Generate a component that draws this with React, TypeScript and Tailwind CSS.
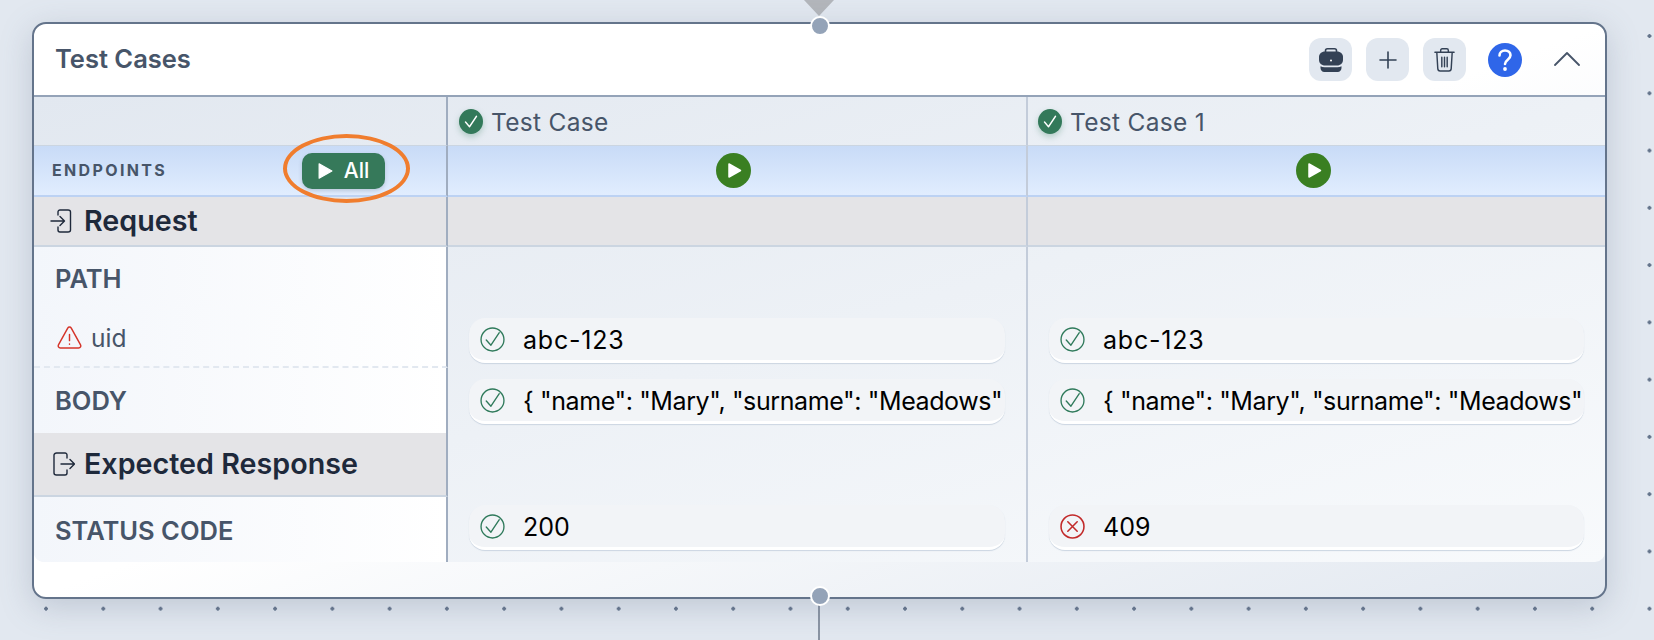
import React from "react";

const font = { fontFamily: "Inter, 'Liberation Sans', sans-serif" };

function CheckCircle({ className = "" }: { className?: string }) {
  return (
    <svg viewBox="0 0 24 24" className={className} fill="none" stroke="#2f7a5b" strokeWidth="1.3" strokeLinecap="round" strokeLinejoin="round">
      <circle cx="12" cy="12" r="11" />
      <path d="M6 12.500 10.500 17.500 18.500 5.500" />
    </svg>
  );
}

function CrossCircle({ className = "" }: { className?: string }) {
  return (
    <svg viewBox="0 0 24 24" className={className} fill="none" stroke="#c22a2a" strokeWidth="1.5" strokeLinecap="round">
      <circle cx="12" cy="12" r="11" />
      <path d="M7.500 7.500 16.500 16.500M16.500 7.500 7.500 16.500" />
    </svg>
  );
}

function StatusBadge() {
  return (
    <svg viewBox="0 0 24 24" className="w-6 h-[25px] shrink-0 drop-shadow-[0_3px_3px_rgba(47,122,91,0.3)]" preserveAspectRatio="none">
      <circle cx="12" cy="12" r="12" fill="#33795a" />
      <path d="M6.500 12.500 10.500 17 17.500 7" fill="none" stroke="#fff" strokeWidth="1.400" strokeLinecap="round" strokeLinejoin="round" />
    </svg>
  );
}

function PlayRound() {
  return (
    <svg viewBox="0 0 35 35" className="w-[35px] h-[35px]">
      <circle cx="17.500" cy="17.500" r="17.500" fill="#3a7f22" />
      <path d="M13 11 24.500 17.500 13 24Z" fill="#fff" stroke="#fff" strokeWidth="1.500" strokeLinejoin="round" />
    </svg>
  );
}

function Pill({ text, ok = true, spacing = "" }: { text: string; ok?: boolean; spacing?: string }) {
  return (
    <div className="flex items-center w-full h-[45px] pl-[11px] pr-[2px] rounded-[16px] bg-[#f2f4f7] border-b-[3px] border-white shadow-[0_1px_1px_#cbd5e1]">
      {ok ? <CheckCircle className="w-[25px] h-[25px] shrink-0" /> : <CrossCircle className="w-[25px] h-[25px] shrink-0" />}
      <span className={`ml-[18px] mt-[2px] text-[25px] leading-[30px] text-black whitespace-nowrap ${spacing}`}>{text}</span>
    </div>
  );
}

function IconButton({ children }: { children: React.ReactNode }) {
  return <div className="w-[43px] h-[43px] rounded-[12px] bg-[#e2e8f0] flex items-center justify-center">{children}</div>;
}

const cols = [
  { name: "Test Case 0", label: "Test Case", uid: "abc-123", status: "200", ok: true, pad: "px-[21px]", border: "border-r-2 border-[#c3ccda]", pl: "pl-[11px]", play: "pr-[8px]" },
  { name: "Test Case 1", label: "Test Case 1", uid: "abc-123", status: "409", ok: false, pad: "pl-[21px] pr-[22px]", border: "", pl: "pl-[10px]", play: "pr-[8px]" },
];

const leftCell = "border-r-2 border-[#a0adc0] flex items-center";
const softLeft = "bg-linear-to-r from-[#f3f6fb] to-white";

export default function App() {
  return (
    <div
      style={font}
      className="relative w-full h-[640px] overflow-hidden bg-[#e2e8f0] bg-[radial-gradient(circle,#64748b_1.6px,transparent_2px)] bg-[size:57.27px_57.27px] bg-[position:17.4px_7.4px] pt-[22px] pl-[32px]"
    >
      {/* incoming triangle and edge */}
      <svg viewBox="0 0 30 16" className="absolute left-[804px] top-0 w-[30px] h-[16px]">
        <path d="M0 0H30L15 16Z" fill="#b3b6bb" />
      </svg>
      <div className="absolute left-[818px] top-[600px] w-[2px] h-[40px] bg-[#8a94a3]" />

      <div className="relative w-[1575px] h-[577px] rounded-[14px] border-2 border-[#64748b] bg-linear-to-br from-white from-50% to-[#e2e8f0] shadow-[0_8px_32px_rgba(100,116,139,0.28)]">
        {/* handles */}
        <div className="absolute left-[776px] top-[-8px] w-[20px] h-[20px] rounded-full bg-[#94a3b8] border-2 border-white z-10" />
        <div className="absolute left-[776px] top-[562px] w-[20px] h-[20px] rounded-full bg-[#94a3b8] border-2 border-white z-10" />

        {/* header */}
        <div className="h-[73px] flex items-center pl-[21px] border-b-2 border-[#94a3b8]">
          <div className="text-[25.5px] font-semibold text-[#475569]">Test Cases</div>
          <div className="ml-auto flex items-center">
            <div className="flex gap-[14px]">
              <IconButton>
                <svg viewBox="0 0 24 24" className="w-[24px] h-[24px]" fill="#334155">
                  <path d="M6.500 5V2.800C6.500 1.500 7.500.8 8.500.8h7c1 0 2 .7 2 2V5" fill="none" stroke="#334155" strokeWidth="1.600" />
                  <path d="M6 3.500h12c3.500 0 6 2.400 6 5.500v3c0 3-2.500 5.500-6 5.500H6C2.500 17.500 0 15 0 12V9c0-3.100 2.500-5.500 6-5.500Z" />
                  <path d="M1.500 18.300c1.200.6 2.600 1 4.200 1h12.600c1.600 0 3-.4 4.200-1V20c0 2.200-1.600 4-3.800 4H5.300c-2.200 0-3.800-1.800-3.800-4Z" />
                  <circle cx="12" cy="12.500" r="1" fill="#fff" />
                </svg>
              </IconButton>
              <IconButton>
                <svg viewBox="0 0 18 18" className="w-[18px] h-[18px]" fill="none" stroke="#334155" strokeWidth="1.600" strokeLinecap="round">
                  <path d="M9 1v16M1 9h16" />
                </svg>
              </IconButton>
              <IconButton>
                <svg viewBox="0 0 24 26" className="w-[23px] h-[26px]" fill="none" stroke="#334155" strokeWidth="1.500" strokeLinecap="round" strokeLinejoin="round">
                  <path d="M2 5h20M8 5V3c0-1 .7-1.700 1.600-1.700h4.800c.9 0 1.600.7 1.600 1.700v2" />
                  <path d="M4 5.500 5 22c.1 1.500 1 2.400 2.400 2.400h9.200c1.400 0 2.300-.9 2.400-2.400l1-16.500" />
                  <path d="M9.200 10v10M12 10v10M14.800 10v10" />
                </svg>
              </IconButton>
            </div>
            <svg viewBox="0 0 34 34" className="w-[34px] h-[34px] ml-[22px]">
              <circle cx="17" cy="17" r="17" fill="#2f66e9" />
              <path d="M11.500 12.500c0-3 2.400-5 5.500-5s5.500 2 5.500 4.800c0 4.300-5.500 4.400-5.500 8.700" fill="none" stroke="#fff" strokeWidth="2.600" strokeLinecap="round" />
              <circle cx="17" cy="26" r="1.900" fill="#fff" />
            </svg>
            <svg viewBox="0 0 26 14" className="w-[26px] h-[14px] ml-[32px] mr-[25px] mb-[2px]" fill="none" stroke="#475569" strokeWidth="1.800" strokeLinecap="round" strokeLinejoin="round">
              <path d="M1 13 13 1l12 12" />
            </svg>
          </div>
        </div>

        {/* table */}
        <div className="grid grid-cols-[414px_580px_1fr] grid-rows-[49px_51px_50px_58px_63px_65px_64px_65px] rounded-b-[10px] overflow-hidden bg-linear-to-br from-[#e2e8f0] to-[#f8fafc]">
          {/* title row */}
          <div className="border-r-2 border-[#a0adc0] border-b border-b-[#cbd5e1]" />
          {cols.map((c) => (
            <div key={c.name} className={`flex items-center gap-2 border-b border-b-[#cbd5e1] ${c.pl} ${c.border}`}>
              <StatusBadge />
              <span className="mt-[2px] text-[24.5px] font-normal text-[#475569] tracking-[0.3px]">{c.label}</span>
            </div>
          ))}

          {/* endpoints row */}
          <div className={`${leftCell} relative pl-[18px] pb-[2px] border-b-2 border-b-[#bcd2f3] bg-linear-to-b from-[#c8dbf7] to-[#e1edfe]`}>
            <span className="text-[16px] font-bold tracking-[2.35px] text-[#475569]">ENDPOINTS</span>
            <div className="absolute left-[268px] top-[7px] w-[83px] h-[36px] rounded-[10px] bg-[#36795a] shadow-[0_2px_4px_rgba(51,65,85,0.2)] flex items-center justify-center gap-[11px]">
              <svg viewBox="0 0 14 16" className="w-[15px] h-[18px]">
                <path d="M1 1.200 13 8 1 14.800Z" fill="#fff" stroke="#fff" strokeWidth="1" strokeLinejoin="round" />
              </svg>
              <span className="text-[21px] font-medium text-white">All</span>
            </div>
            <div className="absolute left-[249px] top-[-12px] w-[127px] h-[69px] rounded-[50%] border-[4px] border-[#f07d2e] z-10" />
          </div>
          {cols.map((c) => (
            <div key={c.name} className={`flex items-center justify-center border-b-2 border-b-[#bcd2f3] bg-linear-to-b from-[#c8dbf7] to-[#e1edfe] ${c.play} ${c.border}`}>
              <PlayRound />
            </div>
          ))}

          {/* request row */}
          <div className={`${leftCell} bg-[#e4e4e7] border-b-2 border-b-[#cbd5e1] pl-[16px]`}>
            <svg viewBox="0 0 22 24" className="w-[22px] h-[24px] shrink-0" fill="none" stroke="#1e293b" strokeWidth="1.400" strokeLinecap="round" strokeLinejoin="round">
              <path d="M8 6V3c0-1 .7-2 2-2h8c1.300 0 2.500 1 2.500 2v18c0 1-1.200 2-2.500 2h-8c-1.300 0-2-1-2-2v-3" />
              <path d="M1 12h13M10 7.500 14.500 12 10 16.500" />
            </svg>
            <span className="ml-[12px] text-[28.7px] font-semibold text-[#1e293b]">Request</span>
          </div>
          {cols.map((c) => (
            <div key={c.name} className={`bg-[#e4e4e7] border-b-2 border-b-[#cbd5e1] ${c.border}`} />
          ))}

          {/* path row */}
          <div className={`${leftCell} ${softLeft} pl-[21px] pt-[6px]`}>
            <span className="text-[25.5px] font-semibold text-[#475569]">PATH</span>
          </div>
          {cols.map((c) => (
            <div key={c.name} className={c.border} />
          ))}

          {/* uid row */}
          <div className={`${leftCell} ${softLeft} pl-[23px] pt-[3px] border-b-2 border-b-[#e2e8f0] [border-bottom-style:dashed]`}>
            <svg viewBox="0 0 24 22" className="w-[25px] h-[23px] shrink-0" fill="none" stroke="#d5352a" strokeWidth="1.400" strokeLinecap="round" strokeLinejoin="round">
              <path d="M10.300 2 1.400 18c-.8 1.500.2 3 1.800 3h17.600c1.600 0 2.600-1.500 1.800-3L13.700 2c-.8-1.400-2.600-1.400-3.400 0Z" />
              <path d="M12 8v6M12 17.200v.3" />
            </svg>
            <span className="ml-[9px] mt-[3px] text-[24.5px] text-[#475569]">uid</span>
          </div>
          {cols.map((c) => (
            <div key={c.name} className={`pt-[13px] ${c.pad} ${c.border}`}>
              <Pill text={c.uid} spacing="tracking-[0.8px]" />
            </div>
          ))}

          {/* body row */}
          <div className={`${leftCell} ${softLeft} pl-[21px] pt-[2px]`}>
            <span className="text-[25.5px] font-semibold text-[#475569]">BODY</span>
          </div>
          {cols.map((c) => (
            <div key={c.name} className={`pt-[11px] ${c.pad} ${c.border}`}>
              <Pill text={'{ "name": "Mary", "surname": "Meadows"'} spacing="tracking-[-0.4px]" />
            </div>
          ))}

          {/* expected response row */}
          <div className={`${leftCell} bg-[#e4e4e7] border-b-2 border-b-[#cbd5e1] pl-[19px]`}>
            <svg viewBox="0 0 22 24" className="w-[22px] h-[24px] shrink-0" fill="none" stroke="#1e293b" strokeWidth="1.400" strokeLinecap="round" strokeLinejoin="round">
              <path d="M14 6V3c0-1-.7-2-2-2H3.500C2.200 1 1 2 1 3v18c0 1 1.200 2 2.500 2H12c1.300 0 2-1 2-2v-3" />
              <path d="M8 12h13M17 7.500 21.500 12 17 16.500" />
            </svg>
            <span className="ml-[9px] text-[28.7px] font-semibold text-[#1e293b]">Expected Response</span>
          </div>
          {cols.map((c) => (
            <div key={c.name} className={c.border} />
          ))}

          {/* status code row */}
          <div className={`${leftCell} ${softLeft} pl-[21px] pt-[3px]`}>
            <span className="text-[25.5px] font-semibold text-[#475569]">STATUS CODE</span>
          </div>
          {cols.map((c) => (
            <div key={c.name} className={`pt-[8px] ${c.pad} ${c.border}`}>
              <Pill text={c.status} ok={c.ok} />
            </div>
          ))}
        </div>
      </div>
    </div>
  );
}
